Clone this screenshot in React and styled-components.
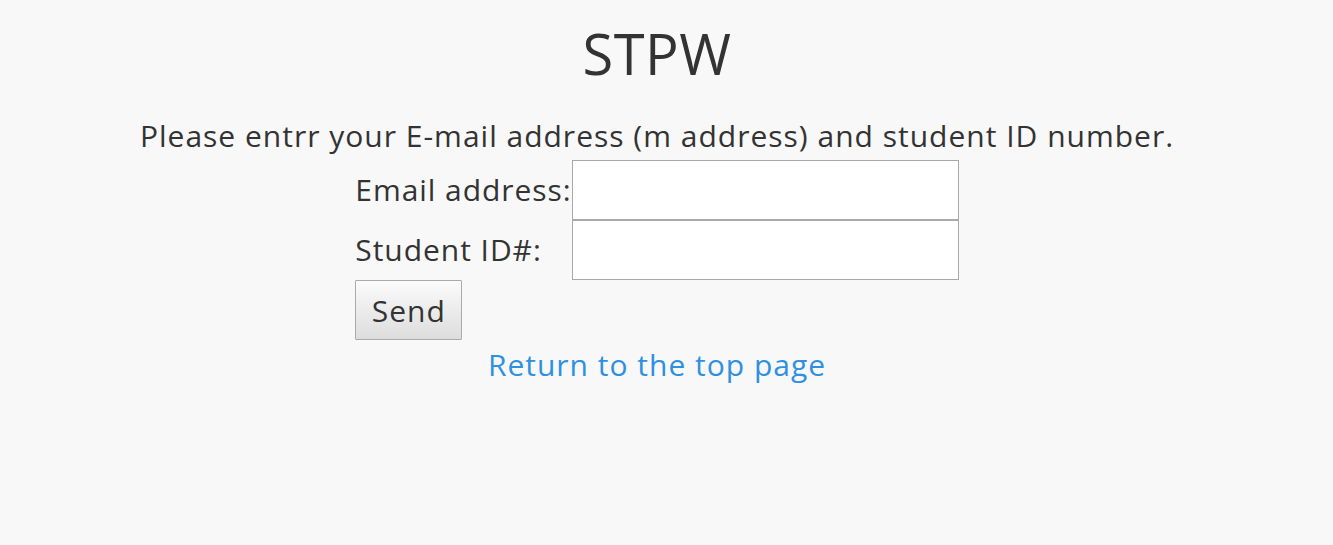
import React from 'react';
import styled, { createGlobalStyle } from 'styled-components';

const GlobalStyle = createGlobalStyle`
	html, body {
		margin: 0;
		padding: 0;
		background-color: #f8f8f8;
	}
	body {
		font-family: "Open Sans", "Noto Sans", sans-serif;
		color: #333333;
	}
`;

const Page = styled.div`
	display: flex;
	flex-direction: column;
	align-items: center;
	min-height: 545px;
	padding: 15px 19px 0 0;
	box-sizing: border-box;
`;

const Title = styled.h1`
	margin: 0;
	font-size: 56px;
	font-weight: 400;
	line-height: 76px;
	letter-spacing: 0.5px;
`;

const Lead = styled.p`
	margin: 25px 0 4px;
	font-size: 30px;
	line-height: 40px;
	letter-spacing: 1px;
`;

const Form = styled.form`
	display: grid;
	grid-template-columns: auto 387px;
	grid-auto-rows: 60px;
	align-items: center;
`;

const Label = styled.label`
	font-size: 30px;
	line-height: 40px;
	letter-spacing: 0.95px;
	white-space: nowrap;
`;

const Input = styled.input`
	width: 100%;
	height: 60px;
	box-sizing: border-box;
	border: 1px solid #a9a9a9;
	background-color: #ffffff;
	font-family: inherit;
	font-size: 24px;
	padding: 0 8px;
	outline: none;
`;

const Button = styled.button`
	width: 107px;
	height: 60px;
	box-sizing: border-box;
	border: 1px solid #aaaaaa;
	border-radius: 1px;
	background: linear-gradient(#fbfbfb, #dddddd);
	font-family: inherit;
	font-size: 30px;
	letter-spacing: 1px;
	color: #333333;
	padding: 0;
	cursor: pointer;
`;

const TopLink = styled.a`
	margin-top: 5px;
	font-size: 30px;
	line-height: 40px;
	letter-spacing: 1px;
	color: #2f90e2;
	text-decoration: none;
`;

export default function App() {
	return (
		<>
			<GlobalStyle />
			<Page>
				<Title>STPW</Title>
				<Lead>Please entrr your E-mail address (m address) and student ID number.</Lead>
				<Form onSubmit={e => e.preventDefault()}>
					<Label htmlFor="email">Email address:</Label>
					<Input id="email" type="text" />
					<Label htmlFor="sid">Student ID#:</Label>
					<Input id="sid" type="text" />
					<Button type="submit">Send</Button>
				</Form>
				<TopLink href="#">Return to the top page</TopLink>
			</Page>
		</>
	);
}
